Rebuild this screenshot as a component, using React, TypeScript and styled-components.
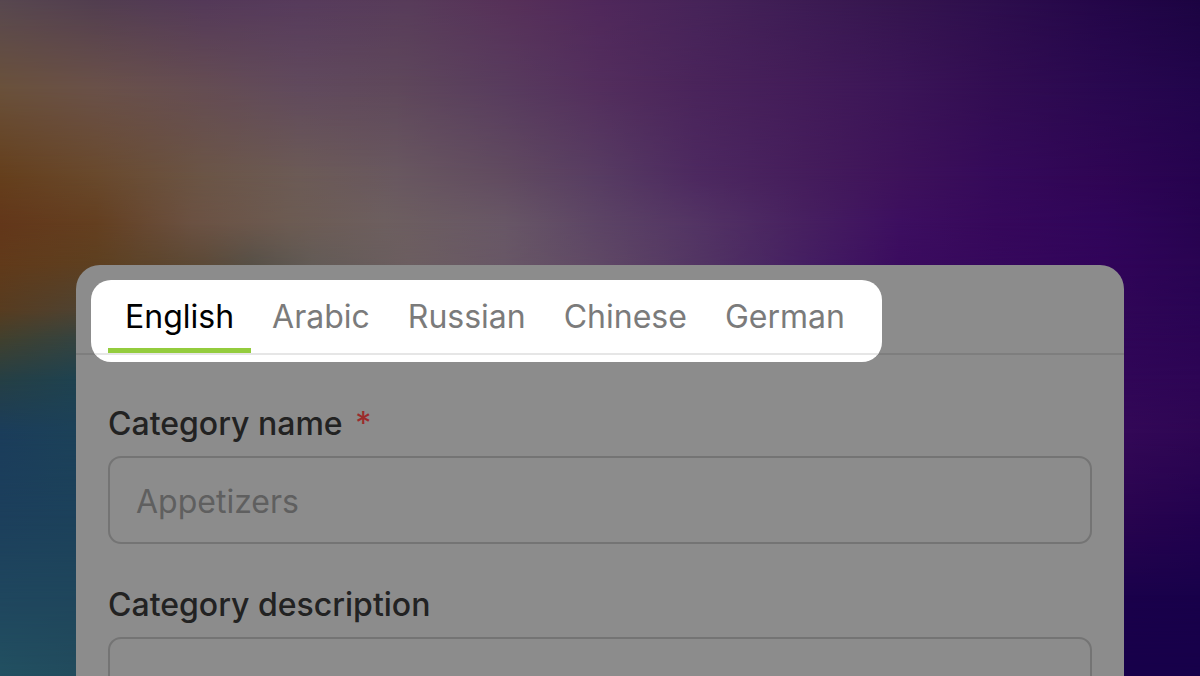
import React, { useState } from "react";
import styled, { createGlobalStyle } from "styled-components";

const GlobalStyle = createGlobalStyle`
  *, *::before, *::after { box-sizing: border-box; }
  body {
    margin: 0;
    background: #17004a;
    font-family: Inter, "Liberation Sans", sans-serif;
  }
`;

/* Each band is a horizontal colour ramp; bands fade into each other downwards. */
const bands: { at: number; colors: string }[] = [
  { at: 0, colors: "#584850 0%, #523e50 8%, #543959 17%, #573b5c 25%, #583c5a 34%, #573059 43%, #50285b 50%, #472459 58%, #3d1c54 67%, #35154f 75%, #2d0e4d 83%, #240649 92%, #1c0442 100%" },
  { at: 13, colors: "#6a513b 0%, #6a5149 8%, #654d53 17%, #614a5d 25%, #5f485b 33%, #583c5e 42%, #532e5d 50%, #4a245b 58%, #431c59 67%, #3b1557 75%, #320d52 83%, #290850 92%, #22054c 100%" },
  { at: 26, colors: "#653f1c 0%, #69492c 8%, #6b5546 17%, #6c5b56 25%, #695860 33%, #614b60 42%, #573c62 50%, #4d2960 58%, #451d5c 67%, #3e125a 75%, #350a5a 83%, #2f0554 92%, #26034f 100%" },
  { at: 33, colors: "#63371a 0%, #643f20 8%, #6b5142 16%, #6c5b52 24%, #6d5f5f 32%, #685766 42%, #5c4465 50%, #533464 58%, #472060 67%, #3d0f60 75%, #36085b 83%, #30055a 92%, #270350 100%" },
  { at: 39, colors: "#613a1a 0%, #5e4020 8%, #5c4a38 17%, #575047 21%, #635b56 26%, #6c5e60 34%, #685766 42%, #5f4865 50%, #513363 59%, #451f62 67%, #3b0c5f 75%, #36085c 83%, #31045a 92%, #290452 100%" },
  { at: 46, colors: "#573c20 0%, #4f4230 6%, #5c5045 18%, #62545c 36%, #4d3360 60%, #3a0c60 78%, #310657 92%, #290454 100%" },
  { at: 50, colors: "#42402d 0%, #36433e 6%, #4a4a50 20%, #3a2960 60%, #300658 92%, #2b0454 100%" },
  { at: 56, colors: "#263f44 0%, #1f424f 6%, #263858 30%, #33085a 80%, #300657 94%, #2d0555 100%" },
  { at: 64, colors: "#1b3d5b 0%, #1c4159 6%, #263858 30%, #33085a 80%, #330857 94%, #2e0653 100%" },
  { at: 76, colors: "#1c3f5c 0%, #1c415b 6%, #1c2c58 40%, #29044f 94%, #23024f 100%" },
  { at: 88, colors: "#1f465e 0%, #1f465c 6%, #1a2050 50%, #1a014b 94%, #18014a 100%" },
  { at: 100, colors: "#225061 0%, #224c5d 6%, #1a1c4c 50%, #17004a 94%, #17004a 100%" },
];

const Page = styled.main`
  display: grid;
  height: 100vh;
  overflow: hidden;
`;

const Backdrop = styled.div`
  grid-area: 1 / 1;
  display: grid;
  min-height: 0;
`;

const Band = styled.div<{ $colors: string; $from: number; $to: number }>`
  grid-area: 1 / 1;
  background: linear-gradient(90deg, ${(p) => p.$colors});
  mask-image: ${(p) =>
    p.$to === 0 ? "none" : `linear-gradient(to bottom, transparent ${p.$from}%, #000 ${p.$to}%)`};
`;

const Stage = styled.div`
  grid-area: 1 / 1;
  min-height: 0;
  padding: 265px 76px 0;
  z-index: 1;
`;

const Card = styled.section`
  border-radius: 24px 24px 0 0;
  background: #8c8c8c;
`;

const CardHeader = styled.header`
  display: flex;
  padding: 15px 15px 0;
  border-bottom: 2px solid #7e7e7e;
`;

const Spotlight = styled.div`
  margin-bottom: -9px;
  padding-bottom: 7px;
  border-radius: 20px;
  background: #fff;
  overflow: hidden;
`;

const TabList = styled.div`
  display: flex;
  gap: 4px;
  padding: 0 20px 0 17px;
  border-bottom: 2px solid #e6e6e6;
`;

const Tab = styled.button<{ $active: boolean }>`
  height: 73px;
  padding: 5px 17px 0;
  border: 0;
  border-bottom: 5px solid ${(p) => (p.$active ? "#94cc3e" : "transparent")};
  background: none;
  color: ${(p) => (p.$active ? "#000" : "#7b7b7b")};
  font: 400 32px/40px Inter, "Liberation Sans", sans-serif;
  cursor: pointer;
`;

const Form = styled.form`
  display: flex;
  flex-direction: column;
  gap: 41px;
  padding: 49px 32px;
`;

const Field = styled.div`
  display: flex;
  flex-direction: column;
  gap: 12px;
`;

const Label = styled.label`
  color: #222;
  font-size: 32px;
  font-weight: 500;
  line-height: 40px;
`;

const Required = styled.span`
  margin-left: 4px;
  color: #9c2b2b;
  font-weight: 400;
`;

const controlStyle = `
  width: 100%;
  height: 88px;
  padding: 2px 26px 0;
  border: 2px solid #747474;
  border-radius: 13px;
  background: transparent;
  color: #222;
  font: 400 32px/40px Inter, "Liberation Sans", sans-serif;
  outline: none;
  &::placeholder { color: #5f5f5f; opacity: 1; }
`;

const TextInput = styled.input`
  ${controlStyle}
`;

const TextArea = styled.textarea`
  ${controlStyle}
  height: 176px;
  padding: 22px 26px;
  resize: none;
`;

const languages = ["English", "Arabic", "Russian", "Chinese", "German"];

export default function App() {
  const [language, setLanguage] = useState("English");
  return (
    <>
      <GlobalStyle />
      <Page>
        <Backdrop aria-hidden="true">
          {bands.map((band, i) => (
            <Band key={band.at} $colors={band.colors} $from={i ? bands[i - 1].at : 0} $to={band.at} />
          ))}
        </Backdrop>
        <Stage>
          <Card>
            <CardHeader>
              <Spotlight>
                <TabList role="tablist" aria-label="Language">
                  {languages.map((name) => (
                    <Tab
                      key={name}
                      type="button"
                      role="tab"
                      aria-selected={name === language}
                      $active={name === language}
                      onClick={() => setLanguage(name)}
                    >
                      {name}
                    </Tab>
                  ))}
                </TabList>
              </Spotlight>
            </CardHeader>
            <Form>
              <Field>
                <Label htmlFor="category-name">
                  Category name <Required>*</Required>
                </Label>
                <TextInput id="category-name" type="text" placeholder="Appetizers" required />
              </Field>
              <Field>
                <Label htmlFor="category-description">Category description</Label>
                <TextArea id="category-description" />
              </Field>
            </Form>
          </Card>
        </Stage>
      </Page>
    </>
  );
}
